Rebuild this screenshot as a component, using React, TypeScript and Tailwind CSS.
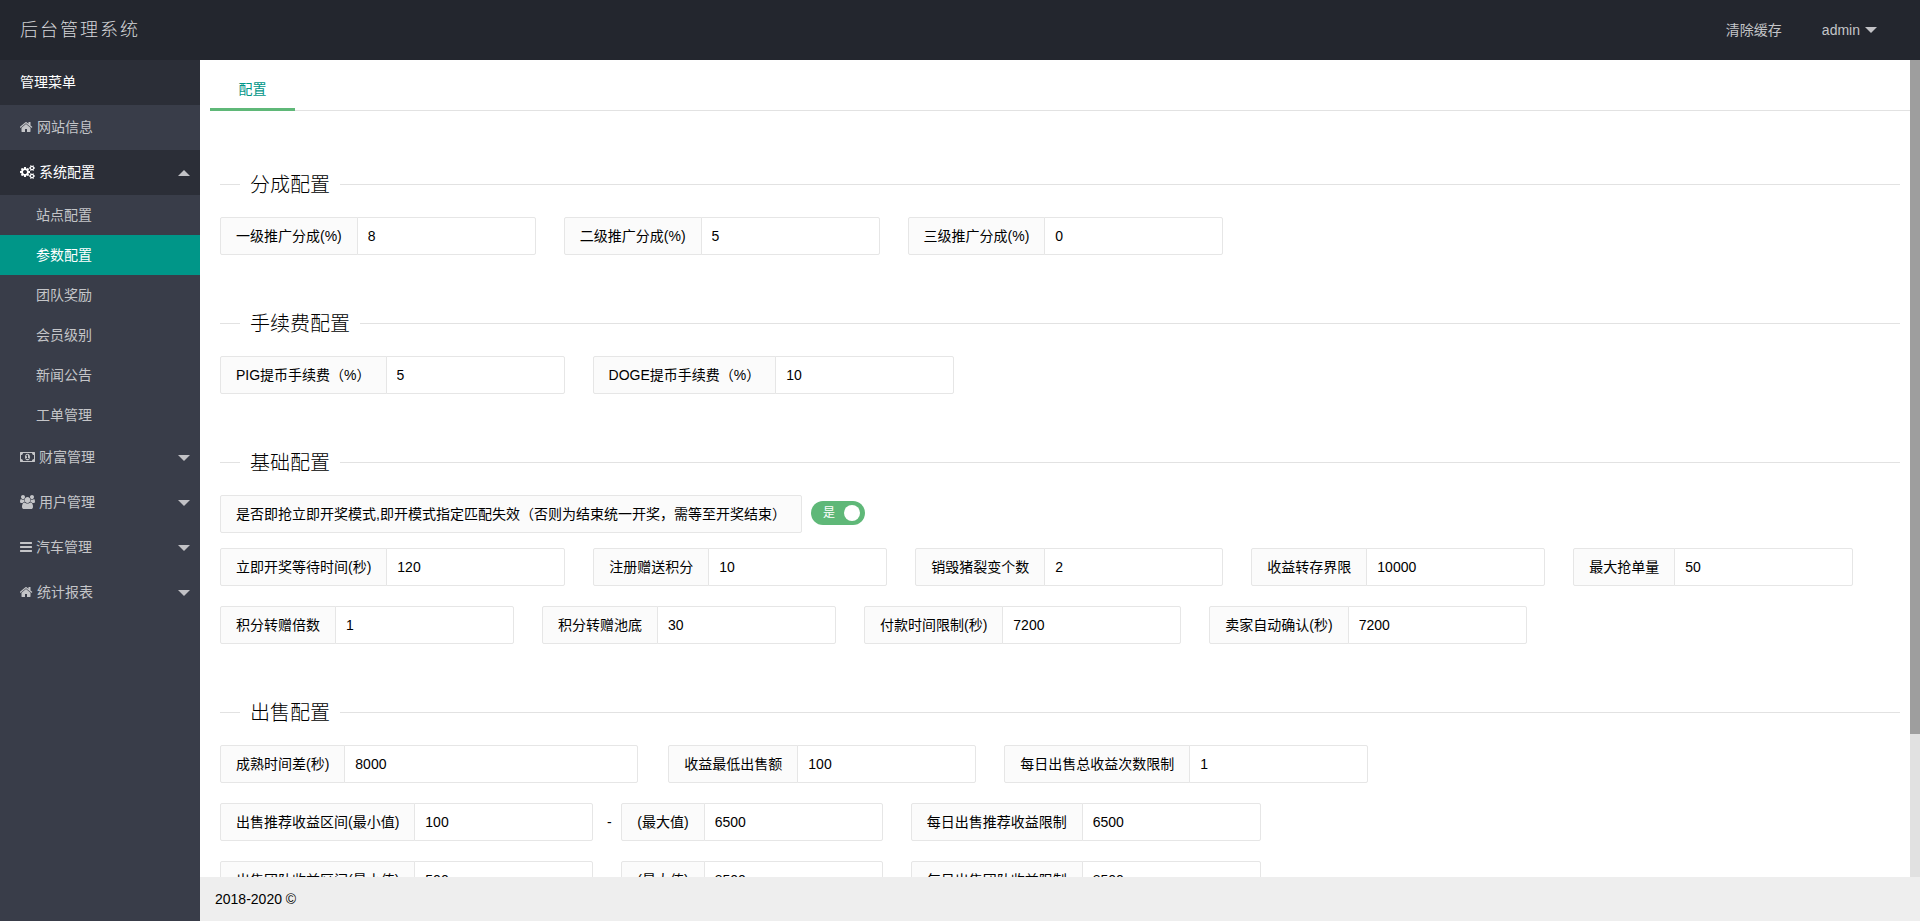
import { useId, useState } from "react";
import type { ReactNode } from "react";

type IconProps = { viewBox: string; className: string; d: string };

function Glyph({ viewBox, className, d }: IconProps) {
  return (
    <svg viewBox={viewBox} className={className} fill="currentColor" aria-hidden="true">
      <path d={d} />
    </svg>
  );
}

const HomeIcon = () => (
  <Glyph
    viewBox="64 0 1664 1792"
    className="h-[14px] w-[13px]"
    d="M1408 992v480q0 26-19 45t-45 19h-384v-384h-256v384h-384q-26 0-45-19t-19-45v-480q0-1 .5-3t.5-3l575-474 575 474q1 2 1 6zm223-69l-62 74q-8 9-21 11h-3q-13 0-21-7l-692-577-692 577q-12 8-24 7-13-2-21-11l-62-74q-8-10-7-23.5t11-21.5l719-599q32-26 76-26t76 26l244 204v-195q0-14 9-23t23-9h192q14 0 23 9t9 23v408l219 182q10 8 11 21.5t-7 23.5z"
  />
);

const CogsIcon = () => (
  <Glyph
    viewBox="64 0 1920 1792"
    className="h-[14px] w-[15px]"
    d="M960 896q0-106-75-181t-181-75-181 75-75 181 75 181 181 75 181-75 75-181zm768 512q0-52-38-90t-90-38-90 38-38 90q0 53 37.5 90.5t90.5 37.5 90.5-37.5 37.5-90.5zm0-1024q0-52-38-90t-90-38-90 38-38 90q0 53 37.5 90.5t90.5 37.5 90.5-37.5 37.5-90.5zm-384 421v185q0 10-7 19.5t-16 10.5l-155 24q-11 35-32 76 34 48 90 115 7 11 7 20 0 12-7 19-23 30-82.5 89.5t-78.5 59.5q-11 0-21-7l-115-90q-37 19-77 31-11 108-23 155-7 24-30 24h-186q-11 0-20-7.5t-10-17.5l-23-153q-34-10-75-31l-118 89q-7 7-20 7-11 0-21-8-144-133-144-160 0-9 7-19 10-14 41-53t47-61q-23-44-35-82l-152-24q-10-1-17-9.5t-7-19.5v-185q0-10 7-19.5t16-10.5l155-24q11-35 32-76-34-48-90-115-7-11-7-20 0-12 7-20 22-30 82-89t79-59q11 0 21 7l115 90q34-18 77-32 11-108 23-154 7-24 30-24h186q11 0 20 7.5t10 17.5l23 153q34 10 75 31l118-89q8-7 20-7 11 0 21 8 144 133 144 160 0 8-7 19-12 16-42 54t-45 60q23 48 34 82l152 23q10 2 17 10.5t7 19.5zm640 533v140q0 16-149 31-12 27-30 52 51 113 51 138 0 4-4 7-122 71-124 71-8 0-46-47t-52-68q-20 2-30 2t-30-2q-14 21-52 68t-46 47q-2 0-124-71-4-3-4-7 0-25 51-138-18-25-30-52-149-15-149-31v-140q0-16 149-31 13-29 30-52-51-113-51-138 0-4 4-7 4-2 35-20t59-34 30-16q8 0 46 46.5t52 67.5q20-2 30-2t30 2q51-71 92-112l6-2q4 0 124 70 4 3 4 7 0 25-51 138 17 23 30 52 149 15 149 31zm0-1024v140q0 16-149 31-12 27-30 52 51 113 51 138 0 4-4 7-122 71-124 71-8 0-46-47t-52-68q-20 2-30 2t-30-2q-14 21-52 68t-46 47q-2 0-124-71-4-3-4-7 0-25 51-138-18-25-30-52-149-15-149-31v-140q0-16 149-31 13-29 30-52-51-113-51-138 0-4 4-7 4-2 35-20t59-34 30-16q8 0 46 46.5t52 67.5q20-2 30-2t30 2q51-71 92-112l6-2q4 0 124 70 4 3 4 7 0 25-51 138 17 23 30 52 149 15 149 31z"
  />
);

const MoneyIcon = () => (
  <Glyph
    viewBox="0 0 1920 1792"
    className="h-[14px] w-[15px]"
    d="M768 1152h384v-96h-128v-448h-114l-148 137 77 80q42-37 55-57h2v288h-128v96zm512-256q0 70-21 142t-59.5 134-101.5 101-138 39-138-39-101.5-101-59.5-134-21-142 21-142 59.5-134 101.5-101 138-39 138 39 101.5 101 59.5 134 21 142zm512 256v-512q-106 0-181-75t-75-181h-1152q0 106-75 181t-181 75v512q106 0 181 75t75 181h1152q0-106 75-181t181-75zm128-832v1152q0 26-19 45t-45 19h-1792q-26 0-45-19t-19-45v-1152q0-26 19-45t45-19h1792q26 0 45 19t19 45z"
  />
);

const UsersIcon = () => (
  <Glyph
    viewBox="0 0 1920 1792"
    className="h-[14px] w-[15px]"
    d="M593 896q-162 5-265 128h-134q-82 0-138-40.5t-56-118.5q0-353 124-353 6 0 43.5 21t97.5 42.5 119 21.5q67 0 133-23-5 37-5 66 0 139 81 256zm1071 637q0 120-73 189.5t-194 69.5h-874q-121 0-194-69.5t-73-189.5q0-53 3.5-103.5t14-109 26.5-108.5 43-97.5 62-81 85.5-53.5 111.5-20q10 0 43 21.5t73 48 107 48 135 21.5 135-21.5 107-48 73-48 43-21.5q61 0 111.5 20t85.5 53.5 62 81 43 97.5 26.5 108.5 14 109 3.5 103.5zm-1024-1277q0 106-75 181t-181 75-181-75-75-181 75-181 181-75 181 75 75 181zm704 384q0 159-112.5 271.5t-271.5 112.5-271.5-112.5-112.5-271.5 112.5-271.5 271.5-112.5 271.5 112.5 112.5 271.5zm576 225q0 78-56 118.5t-138 40.5h-134q-103-123-265-128 81-117 81-256 0-29-5-66 66 23 133 23 59 0 119-21.5t97.5-42.5 43.5-21q124 0 124 353zm-128-609q0 106-75 181t-181 75-181-75-75-181 75-181 181-75 181 75 75 181z"
  />
);

const BarsIcon = () => (
  <Glyph
    viewBox="128 0 1536 1792"
    className="h-[14px] w-[12px]"
    d="M1664 1344v128q0 26-19 45t-45 19h-1408q-26 0-45-19t-19-45v-128q0-26 19-45t45-19h1408q26 0 45 19t19 45zm0-512v128q0 26-19 45t-45 19h-1408q-26 0-45-19t-19-45v-128q0-26 19-45t45-19h1408q26 0 45 19t19 45zm0-512v128q0 26-19 45t-45 19h-1408q-26 0-45-19t-19-45v-128q0-26 19-45t45-19h1408q26 0 45 19t19 45z"
  />
);

function Caret({ up = false }: { up?: boolean }) {
  return (
    <svg viewBox="0 0 12 6" className="h-[6px] w-[12px] text-[#c2c2c6]" fill="currentColor" aria-hidden="true">
      <path d={up ? "M0 6L6 0L12 6Z" : "M0 0H12L6 6Z"} />
    </svg>
  );
}

function MenuGroup({ icon, label, open }: { icon: ReactNode; label: string; open?: boolean }) {
  return (
    <button
      type="button"
      aria-expanded={open ? true : false}
      className={
        open
          ? "flex h-[45px] w-full items-center justify-between bg-[#2b2e37] pr-2.5 pl-5 text-white"
          : "flex h-[45px] w-full items-center justify-between pr-2.5 pl-5"
      }
    >
      <span className="flex items-center gap-1 pb-0.5">
        {icon}
        {label}
      </span>
      <Caret up={open} />
    </button>
  );
}

const subItems = ["站点配置", "参数配置", "团队奖励", "会员级别", "新闻公告", "工单管理"];

function Sidebar() {
  return (
    <nav className="w-[200px] shrink-0 bg-[#393d49] text-sm text-[#c4c5c8]">
      <h2 className="flex h-[45px] items-center bg-[#2b2e37] px-5 pb-0.5 text-white">管理菜单</h2>
      <a href="#info" className="flex h-[45px] items-center gap-1 px-5 pb-0.5">
        <HomeIcon />
        网站信息
      </a>
      <MenuGroup icon={<CogsIcon />} label="系统配置" open />
      <ul>
        {subItems.map((item) => (
          <li key={item}>
            <a
              href="#config"
              className={
                item === "参数配置"
                  ? "flex h-10 items-center bg-[#009688] px-9 text-white"
                  : "flex h-10 items-center px-9"
              }
            >
              {item}
            </a>
          </li>
        ))}
      </ul>
      <MenuGroup icon={<MoneyIcon />} label="财富管理" />
      <MenuGroup icon={<UsersIcon />} label="用户管理" />
      <MenuGroup icon={<BarsIcon />} label="汽车管理" />
      <MenuGroup icon={<HomeIcon />} label="统计报表" />
    </nav>
  );
}

function Field({ label, value, wide }: { label: string; value: string; wide?: boolean }) {
  const id = useId();
  return (
    <div className="flex h-[38px]">
      <label
        htmlFor={id}
        className="flex items-center rounded-l-xs border border-[#e6e6e6] bg-[#fbfbfb] px-[15px] whitespace-nowrap"
      >
        {label}
      </label>
      <input
        id={id}
        type="text"
        defaultValue={value}
        className={
          wide
            ? "-ml-px w-[294px] rounded-r-xs border border-[#e6e6e6] bg-white px-2.5 outline-none"
            : "-ml-px w-[179px] rounded-r-xs border border-[#e6e6e6] bg-white px-2.5 outline-none"
        }
      />
    </div>
  );
}

function Section({ title, children }: { title: string; children: ReactNode }) {
  return (
    <fieldset className="border-t border-[#e2e2e2]">
      <legend className="ml-5 px-2.5 pt-0.5 pb-px text-xl leading-7 font-light">{title}</legend>
      <div className="flex flex-col gap-5 pt-[17px]">{children}</div>
    </fieldset>
  );
}

function Row({ children }: { children: ReactNode }) {
  return <div className="flex flex-wrap gap-x-7 gap-y-5">{children}</div>;
}

function Range({ label, min, max }: { label: string; min: string; max: string }) {
  return (
    <div className="flex items-center">
      <Field label={label} value={min} />
      <span className="w-7 pl-1 text-center">-</span>
      <Field label="(最大值)" value={max} />
    </div>
  );
}

function ModeSwitch() {
  const [on, setOn] = useState(true);
  const id = useId();
  return (
    <div className="flex h-[38px] gap-[9px]">
      <label
        htmlFor={id}
        className="flex items-center rounded-xs border border-[#e6e6e6] bg-[#fbfbfb] px-[15px] whitespace-nowrap"
      >
        是否即抢立即开奖模式,即开模式指定匹配失效（否则为结束统一开奖，需等至开奖结束）
      </label>
      <label
        className={
          on
            ? "mt-1.5 flex h-6 w-[54px] items-center justify-between rounded-full bg-[#5fb878] pr-[5px] pl-3 text-xs text-white"
            : "mt-1.5 flex h-6 w-[54px] flex-row-reverse items-center justify-between rounded-full bg-[#d2d2d2] pr-3 pl-[5px] text-xs text-white"
        }
      >
        <input
          id={id}
          type="checkbox"
          role="switch"
          checked={on}
          onChange={(e) => setOn(e.target.checked)}
          className="sr-only"
        />
        <span>{on ? "是" : "否"}</span>
        <span className="size-4 rounded-full bg-white" />
      </label>
    </div>
  );
}

export default function App() {
  return (
    <div className="flex h-screen flex-col overflow-hidden bg-white font-['Liberation_Sans','Noto_Sans_CJK_SC',sans-serif] text-sm text-black">
      <header className="flex h-[60px] shrink-0 items-center justify-between bg-[#23262e] pr-[43px] pl-5 text-[#c4c5c8]">
        <h1 className="text-lg leading-[58px] font-light tracking-[2px] text-[#d6d7da]">后台管理系统</h1>
        <div className="flex items-center gap-10">
          <a href="#cache">清除缓存</a>
          <button type="button" className="flex items-center gap-[5px]">
            admin
            <Caret />
          </button>
        </div>
      </header>
      <div className="flex min-h-0 flex-1">
        <Sidebar />
        <div className="flex min-w-0 flex-1 flex-col">
          <div className="flex min-h-0 flex-1">
            <main className="min-w-0 flex-1 overflow-y-auto [scrollbar-width:none]">
              <div className="ml-2.5 flex h-[51px] items-end border-b border-[#e2e2e2]">
                <a
                  href="#config"
                  className="-mb-px flex h-[42px] w-[85px] items-center justify-center border-b-3 border-[#5fb878] text-[#009688]"
                >
                  配置
                </a>
              </div>
              <form
                className="flex flex-col gap-[53px] pt-[58px] pr-2.5 pb-[93px] pl-5"
                onSubmit={(e) => e.preventDefault()}
              >
                <Section title="分成配置">
                  <Row>
                    <Field label="一级推广分成(%)" value="8" />
                    <Field label="二级推广分成(%)" value="5" />
                    <Field label="三级推广分成(%)" value="0" />
                  </Row>
                </Section>
                <Section title="手续费配置">
                  <Row>
                    <Field label="PIG提币手续费（%）" value="5" />
                    <Field label="DOGE提币手续费（%）" value="10" />
                  </Row>
                </Section>
                <Section title="基础配置">
                  <div className="flex flex-col gap-[15px]">
                    <ModeSwitch />
                    <Row>
                      <Field label="立即开奖等待时间(秒)" value="120" />
                      <Field label="注册赠送积分" value="10" />
                      <Field label="销毁猪裂变个数" value="2" />
                      <Field label="收益转存界限" value="10000" />
                      <Field label="最大抢单量" value="50" />
                    </Row>
                  </div>
                  <Row>
                    <Field label="积分转赠倍数" value="1" />
                    <Field label="积分转赠池底" value="30" />
                    <Field label="付款时间限制(秒)" value="7200" />
                    <Field label="卖家自动确认(秒)" value="7200" />
                  </Row>
                </Section>
                <Section title="出售配置">
                  <div className="flex flex-wrap gap-x-[30px] gap-y-5">
                    <Field label="成熟时间差(秒)" value="8000" wide />
                    <Row>
                      <Field label="收益最低出售额" value="100" />
                      <Field label="每日出售总收益次数限制" value="1" />
                    </Row>
                  </div>
                  <Row>
                    <Range label="出售推荐收益区间(最小值)" min="100" max="6500" />
                    <Field label="每日出售推荐收益限制" value="6500" />
                  </Row>
                  <Row>
                    <Range label="出售团队收益区间(最小值)" min="500" max="8500" />
                    <Field label="每日出售团队收益限制" value="8500" />
                  </Row>
                </Section>
              </form>
            </main>
            <div className="w-2.5 shrink-0 bg-[#e1e1e1]" aria-hidden="true">
              <div className="h-[82.5%] bg-[#9e9e9e]" />
            </div>
          </div>
          <footer className="flex h-11 shrink-0 items-center bg-[#eeeeee] px-[15px]">2018-2020 ©</footer>
        </div>
      </div>
    </div>
  );
}
